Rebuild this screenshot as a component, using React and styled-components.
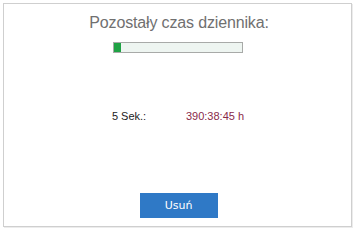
import React from "react";
import styled, { createGlobalStyle } from "styled-components";

const Global = createGlobalStyle`
  html, body { margin: 0; padding: 0; background: #fff; }
  body { font-family: "Liberation Sans", Arial, sans-serif; }
`;

const Page = styled.div`
  padding: 3px 4px 0 3px;
  width: 356px;
  height: 234px;
  box-sizing: border-box;
`;

const Panel = styled.div`
  width: 349px;
  height: 224px;
  box-sizing: border-box;
  border: 1px solid #cfcfcf;
  box-shadow: 1px 1px 0 #ececec;
  display: flex;
  flex-direction: column;
  align-items: center;
  padding-top: 9px;
`;

const Title = styled.div`
  font-size: 16px;
  color: #707070;
  line-height: 20px;
  letter-spacing: -0.15px;
  margin-left: 3px;
`;

const Bar = styled.div`
  margin-top: 9px;
  width: 130px;
  height: 11px;
  box-sizing: border-box;
  border: 1px solid #a8aaa8;
  background: #eef5f1;
  display: flex;
`;

const Fill = styled.div`
  height: 100%;
  background: #1fa244;
`;

const InfoRow = styled.div`
  margin-top: 56px;
  display: flex;
  font-size: 11px;
  line-height: 14px;
  margin-left: 1px;
`;

const Label = styled.span`
  color: #222;
  width: 74px;
`;

const Value = styled.span`
  color: #8a2a4a;
`;

const Button = styled.button`
  margin-top: 70px;
  margin-left: 2px;
  width: 78px;
  height: 25px;
  border: none;
  background: #2f79c6;
  color: #fff;
  font-family: "DejaVu Sans", sans-serif;
  font-size: 11px;
  padding: 0;
`;

export default function App() {
  return (
    <Page>
      <Global />
      <Panel>
        <Title>Pozostały czas dziennika:</Title>
        <Bar>
          <Fill style={{ width: "6%" }} />
        </Bar>
        <InfoRow>
          <Label>5 Sek.:</Label>
          <Value>390:38:45 h</Value>
        </InfoRow>
        <Button>Usuń</Button>
      </Panel>
    </Page>
  );
}
